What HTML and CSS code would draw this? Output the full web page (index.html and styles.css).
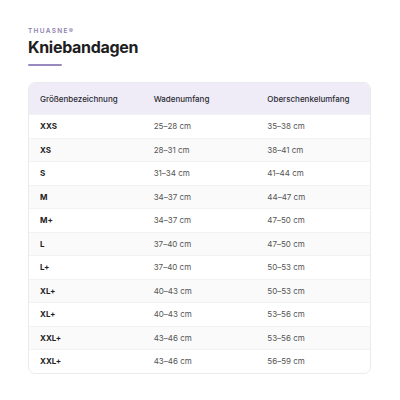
FILE: index.html
```html
<!DOCTYPE html>
<html lang="de">
<head>
    <meta charset="UTF-8">
    <meta name="viewport" content="width=device-width, initial-scale=1.0">
    <title>Kniebandagen | Thuasne</title>
    <link rel="stylesheet" href="styles.css">
</head>
<body>
    <main class="page">
        <header class="title-block">
            <p class="brand">THUASNE®</p>
            <h1>Kniebandagen</h1>
            <div class="title-bar"></div>
        </header>

        <div class="size-card">
            <table class="size-table">
                <thead>
                    <tr>
                        <th>Größenbezeichnung</th>
                        <th>Wadenumfang</th>
                        <th>Oberschenkelumfang</th>
                    </tr>
                </thead>
                <tbody>
                    <tr><td class="size">XXS</td><td>25–28 cm</td><td>35–38 cm</td></tr>
                    <tr><td class="size">XS</td><td>28–31 cm</td><td>38–41 cm</td></tr>
                    <tr><td class="size">S</td><td>31–34 cm</td><td>41–44 cm</td></tr>
                    <tr><td class="size">M</td><td>34–37 cm</td><td>44–47 cm</td></tr>
                    <tr><td class="size">M+</td><td>34–37 cm</td><td>47–50 cm</td></tr>
                    <tr><td class="size">L</td><td>37–40 cm</td><td>47–50 cm</td></tr>
                    <tr><td class="size">L+</td><td>37–40 cm</td><td>50–53 cm</td></tr>
                    <tr><td class="size">XL+</td><td>40–43 cm</td><td>50–53 cm</td></tr>
                    <tr><td class="size">XL+</td><td>40–43 cm</td><td>53–56 cm</td></tr>
                    <tr><td class="size">XXL+</td><td>43–46 cm</td><td>53–56 cm</td></tr>
                    <tr><td class="size">XXL+</td><td>43–46 cm</td><td>56–59 cm</td></tr>
                </tbody>
            </table>
        </div>
    </main>
</body>
</html>
```

FILE: styles.css
```css
body {
    margin: 0;
    font-family: Inter, "Noto Sans", sans-serif;
    background-color: #ffffff;
    color: #222;
}
.page {
    padding: 27px 29px 0 28px;
}
.title-block {
    margin-bottom: 16px;
}
.brand {
    margin: 0;
    font-size: 6.5px;
    font-weight: 600;
    letter-spacing: 1.3px;
    color: #8e80ad;
    line-height: 8px;
}
h1 {
    margin: 2px 0 0;
    font-size: 16px;
    font-weight: 700;
    letter-spacing: -0.3px;
    color: #1d1d22;
    line-height: 20px;
}
.title-bar {
    width: 34px;
    height: 2px;
    margin-top: 7px;
    background-color: #9a89c0;
    border-radius: 1px;
}
.size-card {
    border: 1px solid #ebebef;
    border-radius: 7px;
    overflow: hidden;
}
.size-table {
    width: 100%;
    border-collapse: collapse;
    table-layout: fixed;
    font-size: 8px;
}
.size-table th {
    background-color: #efecf8;
    text-align: left;
    font-weight: 500;
    color: #2a2a30;
    height: 31px;
    padding: 0 11px;
}
.size-table td {
    height: 22.5px;
    padding: 0 11px;
    color: #555;
    border-top: 1px solid #f2f2f4;
}
.size-table td.size {
    font-weight: 700;
    color: #1d1d22;
}
.size-table tbody tr:nth-child(even) td {
    background-color: #fafafb;
}
```
